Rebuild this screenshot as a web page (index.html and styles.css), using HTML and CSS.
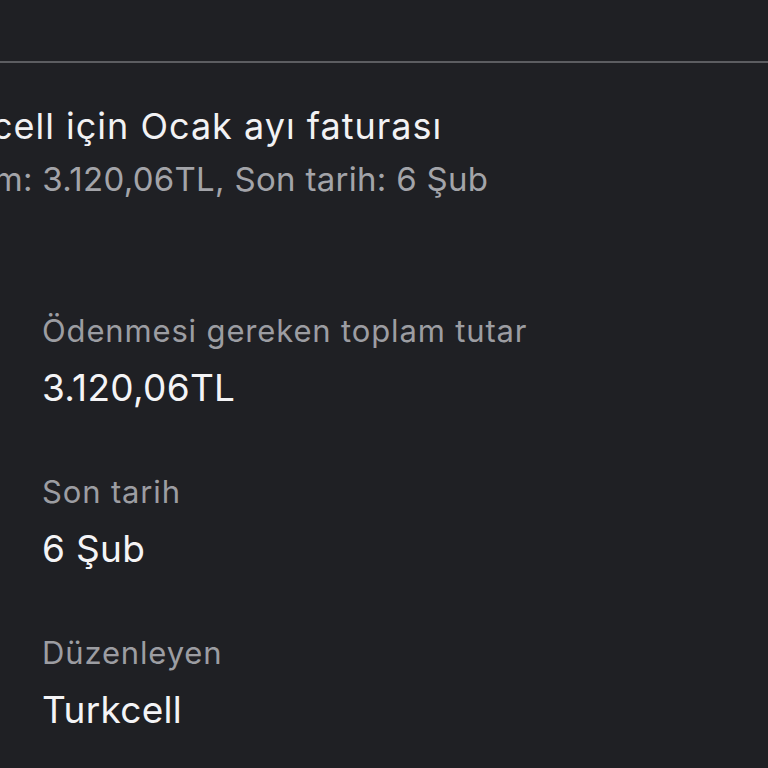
FILE: index.html
```html
<!DOCTYPE html>
<html lang="tr">
<head>
<meta charset="utf-8">
<link rel="stylesheet" href="styles.css">
</head>
<body>
<div class="screen">
  <div class="divider"></div>
  <header class="head">
    <h1 class="title">Turkcell için Ocak ayı faturası</h1>
    <p class="subtitle">Toplam: 3.120,06TL, Son tarih: 6 Şub</p>
  </header>
  <section class="details">
    <div class="field">
      <div class="label">Ödenmesi gereken toplam tutar</div>
      <div class="value">3.120,06TL</div>
    </div>
    <div class="field">
      <div class="label">Son tarih</div>
      <div class="value">6 Şub</div>
    </div>
    <div class="field">
      <div class="label">Düzenleyen</div>
      <div class="value">Turkcell</div>
    </div>
  </section>
</div>
</body>
</html>
```
FILE: styles.css
```css
html, body {
  margin: 0;
  padding: 0;
  background: #1f2024;
}
.screen {
  width: 768px;
  height: 768px;
  overflow: hidden;
  background: #1f2024;
  font-family: Inter, "Noto Sans", sans-serif;
  display: flex;
  flex-direction: column;
}
.divider {
  margin-top: 61px;
  height: 2px;
  background: #5c5d61;
}
.head {
  padding-top: 39px;
}
.title {
  margin: 0;
  font-size: 36px;
  font-weight: 400;
  line-height: 48px;
  letter-spacing: 1px;
  color: #f2f2f4;
  white-space: nowrap;
  text-indent: -87px;
}
.subtitle {
  margin: 7px 0 0;
  font-size: 33px;
  line-height: 44px;
  letter-spacing: 0.3px;
  color: #a3a4a9;
  white-space: nowrap;
  text-indent: -93px;
}
.details {
  padding: 110px 0 0 42px;
  display: flex;
  flex-direction: column;
  gap: 61px;
}
.field {
  display: flex;
  flex-direction: column;
  gap: 14px;
}
.label {
  font-size: 31px;
  line-height: 40px;
  letter-spacing: 0.85px;
  color: #9c9da2;
}
.value {
  font-size: 37px;
  line-height: 46px;
  letter-spacing: 0.3px;
  color: #f4f4f6;
}
```
